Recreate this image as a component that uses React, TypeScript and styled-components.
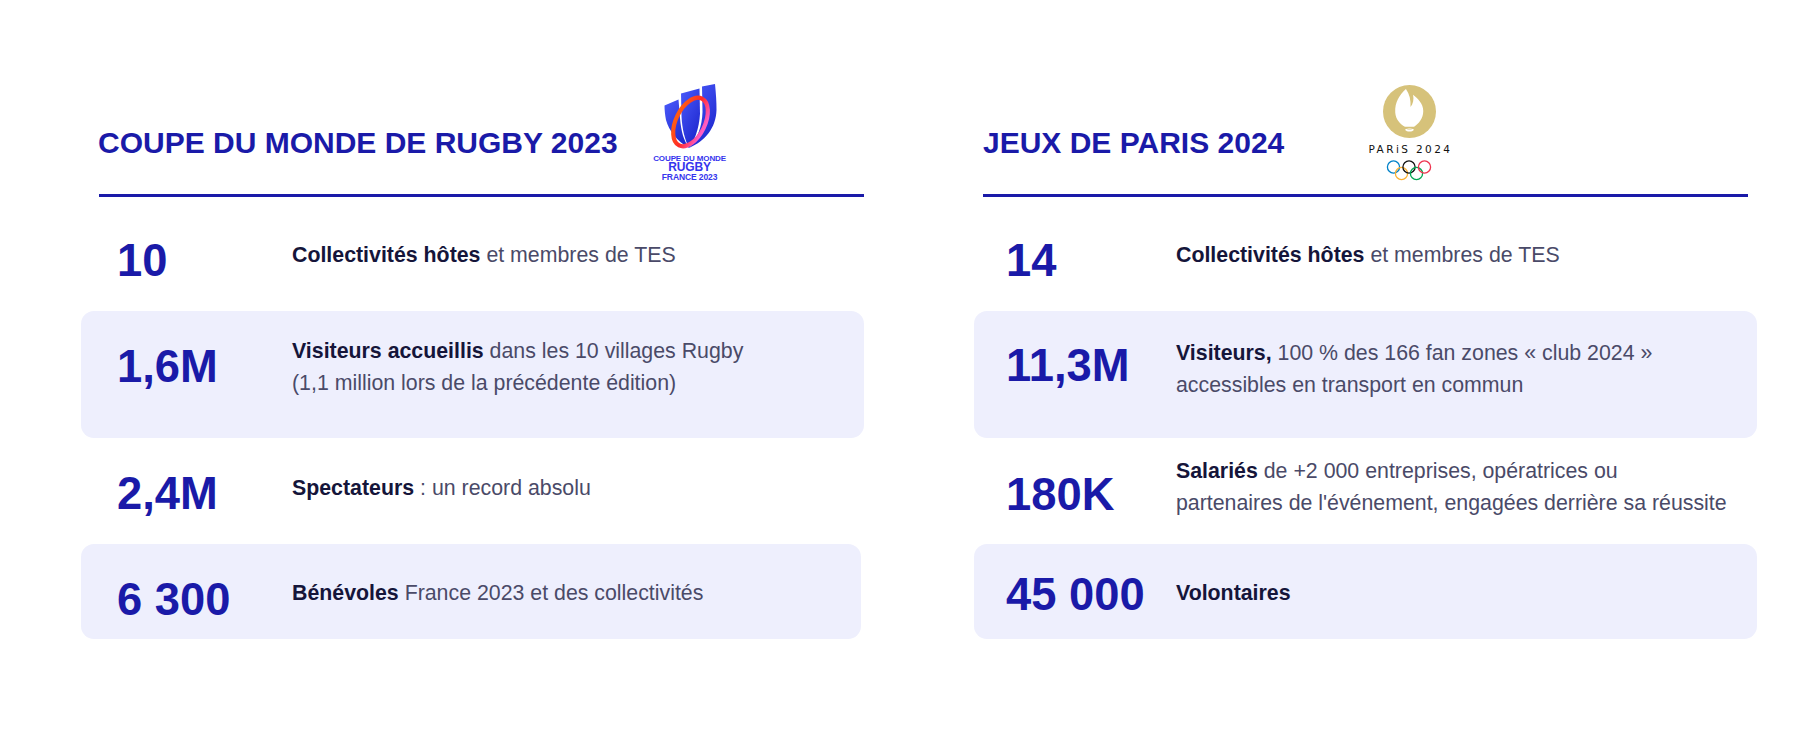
import React from 'react';
import styled, { createGlobalStyle } from 'styled-components';

const BLUE = '#1a1aa8';

const GlobalStyle = createGlobalStyle`
  html, body { margin: 0; padding: 0; background: #ffffff; }
  body { font-family: "Liberation Sans", Arial, sans-serif; }
`;

const Page = styled.main`
  width: 1798px;
  height: 736px;
  box-sizing: border-box;
  padding: 84px 0 0 81px;
  display: flex;
  align-items: flex-start;
  gap: 110px;
`;

const Column = styled.section`
  width: 783px;
  display: flex;
  flex-direction: column;
`;

const Header = styled.header<{ $inset: number; $gap: number }>`
  height: 110px;
  box-sizing: border-box;
  display: flex;
  align-items: flex-start;
  padding-left: ${p => p.$inset}px;
  gap: ${p => p.$gap}px;
`;

const Title = styled.h2`
  margin: 41px 0 0;
  font-size: 30px;
  line-height: 36px;
  font-weight: 700;
  color: ${BLUE};
  white-space: nowrap;
`;

const Rule = styled.div<{ $left: number; $right: number }>`
  height: 3px;
  background: ${BLUE};
  margin: 0 ${p => p.$right}px 0 ${p => p.$left}px;
`;

const Row = styled.div<{ $filled?: boolean; $h: number; $pad: number; $inset: number; $trim?: number }>`
  height: ${p => p.$h}px;
  box-sizing: border-box;
  padding: ${p => p.$pad}px 0 0 ${p => p.$inset}px;
  margin-right: ${p => p.$trim ?? 0}px;
  display: flex;
  align-items: flex-start;
  background: ${p => (p.$filled ? '#eeeffd' : 'transparent')};
  border-radius: 13px;
`;

const Figure = styled.div<{ $w: number }>`
  width: ${p => p.$w}px;
  flex: none;
  font-size: 45.33px;
  line-height: 1;
  font-weight: 700;
  color: ${BLUE};
  white-space: nowrap;
`;

const Desc = styled.p<{ $shift: number }>`
  margin: ${p => p.$shift}px 0 0;
  font-size: 21.33px;
  line-height: 32px;
  color: #4a4a68;
  white-space: nowrap;

  strong {
    color: #15153a;
    font-weight: 700;
  }
`;

/* ---------- Rugby World Cup logo ---------- */

const RugbyLogoBox = styled.div`
  width: 74px;
  flex: none;
  display: flex;
  flex-direction: column;
  align-items: center;
  color: #3535ee;
  font-weight: 700;
  white-space: nowrap;
`;

const RugbyLine = styled.span<{ $size: number; $lh: number; $mt?: number }>`
  display: block;
  font-size: ${p => p.$size}px;
  line-height: ${p => p.$lh}px;
  margin-top: ${p => p.$mt ?? 0}px;
  letter-spacing: -0.1px;
`;

const RugbyLogo = () => (
  <RugbyLogoBox>
    <svg width="74" height="71" viewBox="0 0 74 71">
      <defs>
        <linearGradient id="cup" x1="0" y1="0" x2="0.6" y2="1">
          <stop offset="0" stopColor="#4a5afa" />
          <stop offset="1" stopColor="#1e28cf" />
        </linearGradient>
        <linearGradient id="ring" x1="0" y1="0" x2="1" y2="0">
          <stop offset="0" stopColor="#ff5a14" />
          <stop offset="0.5" stopColor="#ff2b28" />
          <stop offset="1" stopColor="#ff5cc4" />
        </linearGradient>
      </defs>
      <path
        d="M11.5 21.5 L25.5 15.5 L27 34 C28 48 31 57 36 64 C24 57 16 47 13 36 C12 31 11.5 26 11.5 21.5 Z"
        fill="url(#cup)"
      />
      <path
        d="M28 9.5 L46.5 4.5 L47 30 C46 46 41 57 36 64 C32 56 29 45 28.5 32 Z"
        fill="url(#cup)"
      />
      <path
        d="M49 2.5 L62 0 C63 10 63.5 18 63.5 26 C63 44 52 57 36 64 C45 54 49 42 49.5 28 Z"
        fill="url(#cup)"
      />
      <ellipse
        cx="37.5"
        cy="38"
        rx="14.5"
        ry="26"
        transform="rotate(26 37.5 38)"
        fill="none"
        stroke="url(#ring)"
        strokeWidth="4.2"
      />
    </svg>
    <RugbyLine $size={8} $lh={8}>COUPE DU MONDE</RugbyLine>
    <RugbyLine $size={12} $lh={11} $mt={-1}>RUGBY</RugbyLine>
    <RugbyLine $size={8.5} $lh={9}>FRANCE 2023</RugbyLine>
  </RugbyLogoBox>
);

/* ---------- Paris 2024 logo ---------- */

const ParisLogoBox = styled.div`
  width: 86px;
  flex: none;
  margin-top: 1px;
  display: flex;
  flex-direction: column;
  align-items: center;
`;

const ParisWord = styled.span`
  display: block;
  margin: 6px 0 0 2.4px;
  font-family: "DejaVu Sans", sans-serif;
  font-size: 10.5px;
  line-height: 11px;
  letter-spacing: 2.4px;
  color: #111111;
  white-space: nowrap;
`;

const RingsSvg = styled.svg`
  display: block;
  margin-top: 5px;
`;

const ParisLogo = () => (
  <ParisLogoBox>
    <svg width="53" height="53" viewBox="0 0 52 52">
      <circle cx="26" cy="26" r="26" fill="#d6c27a" />
      <path
        d="M22.5 4 C16 10 11.5 17 12 27 C12.5 34 17 38.5 21.5 41 L30.5 41 C35 38 39.5 33 39.5 25.5 C39.5 18 34 13 29.5 9.5 C30.5 14 29.5 18.5 27 21.5 C27.5 15 26 9 22.5 4 Z"
        fill="#ffffff"
      />
      <path d="M21.5 43.8 C23.5 42.3 28.5 42.3 30.5 43.8 C28.5 46.3 23.5 46.3 21.5 43.8 Z" fill="#ffffff" />
      <path d="M23.5 43 C25 43.8 27 43.8 28.5 43" stroke="#d6c27a" strokeWidth="0.6" fill="none" />
    </svg>
    <ParisWord>PARiS 2024</ParisWord>
    <RingsSvg width="46" height="21" viewBox="0 0 46 21">
      <g fill="none" strokeWidth="1.3">
        <circle cx="7.5" cy="7" r="6.1" stroke="#0081c8" />
        <circle cx="15.5" cy="13.5" r="6.1" stroke="#fcb131" />
        <circle cx="23" cy="7" r="6.1" stroke="#111111" />
        <circle cx="30.5" cy="13.5" r="6.1" stroke="#00a651" />
        <circle cx="38.5" cy="7" r="6.1" stroke="#ee334e" />
      </g>
    </RingsSvg>
  </ParisLogoBox>
);

/* ---------- Data ---------- */

type Stat = {
  value: string;
  desc: React.ReactNode;
  h: number;
  pad: number;
  shift: number;
  filled?: boolean;
  trim?: number;
};

type Col = {
  title: string;
  logo: React.ReactNode;
  headerInset: number;
  logoGap: number;
  ruleLeft: number;
  ruleRight: number;
  rowInset: number;
  figWidth: number;
  stats: Stat[];
};

const columns: Col[] = [
  {
    title: 'COUPE DU MONDE DE RUGBY 2023',
    logo: <RugbyLogo />,
    headerInset: 17,
    logoGap: 35,
    ruleLeft: 18,
    ruleRight: 0,
    rowInset: 36,
    figWidth: 175,
    stats: [
      {
        value: '10',
        desc: (
          <>
            <strong>Collectivités hôtes</strong> et membres de TES
          </>
        ),
        h: 114,
        pad: 41,
        shift: 1,
      },
      {
        value: '1,6M',
        desc: (
          <>
            <strong>Visiteurs accueillis</strong> dans les 10 villages Rugby
            <br />
            (1,1 million lors de la précédente édition)
          </>
        ),
        h: 127,
        pad: 33,
        shift: -9,
        filled: true,
      },
      {
        value: '2,4M',
        desc: (
          <>
            <strong>Spectateurs</strong> : un record absolu
          </>
        ),
        h: 106,
        pad: 33,
        shift: 1,
      },
      {
        value: '6 300',
        desc: (
          <>
            <strong>Bénévoles</strong> France 2023 et des collectivités
          </>
        ),
        h: 95,
        pad: 33,
        shift: 0,
        filled: true,
        trim: 3,
      },
    ],
  },
  {
    title: 'JEUX DE PARIS 2024',
    logo: <ParisLogo />,
    headerInset: 9,
    logoGap: 82,
    ruleLeft: 9,
    ruleRight: 9,
    rowInset: 32,
    figWidth: 170,
    stats: [
      {
        value: '14',
        desc: (
          <>
            <strong>Collectivités hôtes</strong> et membres de TES
          </>
        ),
        h: 114,
        pad: 41,
        shift: 1,
      },
      {
        value: '11,3M',
        desc: (
          <>
            <strong>Visiteurs,</strong> 100 % des 166 fan zones « club 2024 »
            <br />
            accessibles en transport en commun
          </>
        ),
        h: 127,
        pad: 32,
        shift: -6,
        filled: true,
      },
      {
        value: '180K',
        desc: (
          <>
            <strong>Salariés</strong> de +2 000 entreprises, opératrices ou
            <br />
            partenaires de l'événement, engagées derrière sa réussite
          </>
        ),
        h: 106,
        pad: 34,
        shift: -17,
      },
      {
        value: '45 000',
        desc: (
          <>
            <strong>Volontaires</strong>
          </>
        ),
        h: 95,
        pad: 28,
        shift: 5,
        filled: true,
      },
    ],
  },
];

export default function App() {
  return (
    <>
      <GlobalStyle />
      <Page>
        {columns.map(col => (
          <Column key={col.title}>
            <Header $inset={col.headerInset} $gap={col.logoGap}>
              <Title>{col.title}</Title>
              {col.logo}
            </Header>
            <Rule $left={col.ruleLeft} $right={col.ruleRight} />
            {col.stats.map(s => (
              <Row
                key={s.value}
                $filled={s.filled}
                $h={s.h}
                $pad={s.pad}
                $inset={col.rowInset}
                $trim={s.trim}
              >
                <Figure $w={col.figWidth}>{s.value}</Figure>
                <Desc $shift={s.shift}>{s.desc}</Desc>
              </Row>
            ))}
          </Column>
        ))}
      </Page>
    </>
  );
}
